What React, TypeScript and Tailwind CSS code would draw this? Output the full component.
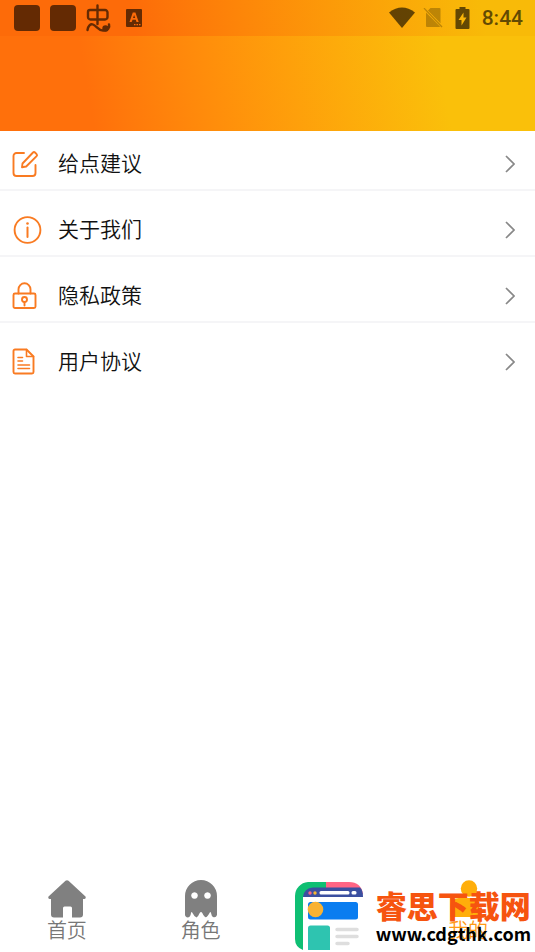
import type { ReactNode } from "react";

type MenuItem = { label: string; icon: ReactNode };

const strokeProps = {
  fill: "none",
  stroke: "currentColor",
  strokeWidth: 1.9,
  strokeLinecap: "round" as const,
  strokeLinejoin: "round" as const,
};

const EditIcon = () => (
  <svg width="28" height="28" viewBox="0 0 28 28" {...strokeProps}>
    <path d="M12 3H4.500a3 3 0 0 0-3 3V23a3 3 0 0 0 3 3H20.500a3 3 0 0 0 3-3V15" />
    <path d="M10.500 13.500 21 2.500q1-1 2 0l1.600 1.600q1 1 0 2L14.200 16.500 10 17.300z" />
  </svg>
);

const InfoIcon = () => (
  <svg width="30" height="28" viewBox="0 0 30 28" {...strokeProps}>
    <circle cx="15.500" cy="14" r="12.900" />
    <path d="M15.500 11.500V21" strokeWidth="2" />
    <circle cx="15.500" cy="7.500" r="1.300" fill="currentColor" stroke="none" />
  </svg>
);

const LockIcon = () => (
  <svg width="28" height="28" viewBox="0 0 28 28" {...strokeProps}>
    <rect x="1.500" y="11.500" width="22" height="14.500" rx="1.500" />
    <path d="M6.500 11.500V7.300a6 6 0 0 1 12 0V11.500" />
    <circle cx="12.500" cy="17.500" r="2.500" />
    <path d="M12.500 20V23.500" />
  </svg>
);

const DocIcon = () => (
  <svg width="28" height="28" viewBox="0 0 28 28" {...strokeProps}>
    <path d="M14.500 1.500H3A1.500 1.500 0 0 0 1.500 3V24a1.500 1.500 0 0 0 1.500 1.500H20a1.500 1.500 0 0 0 1.500-1.500V8.500z" />
    <path d="M14.500 1.500V8.500H21.500M6 9.500H10.500M6 13H10.500M6 17H17.500M6 20.500H17.500" strokeWidth="1.600" />
  </svg>
);

const MENU: MenuItem[] = [
  { label: "给点建议", icon: <EditIcon /> },
  { label: "关于我们", icon: <InfoIcon /> },
  { label: "隐私政策", icon: <LockIcon /> },
  { label: "用户协议", icon: <DocIcon /> },
];

function StatusBar() {
  return (
    <div className="flex h-9 items-center justify-between bg-linear-80 from-[#fd6b09] from-25% to-[#f8ba08] to-90% pr-3 pl-3.5">
      <div className="flex items-center gap-2.5 text-black opacity-60">
        <span className="size-[26px] rounded-sm bg-current" />
        <span className="size-[26px] rounded-sm bg-current" />
        <svg width="26" height="28" viewBox="0 0 26 28" fill="none" stroke="currentColor" strokeWidth="2.400" strokeLinecap="round" strokeLinejoin="round">
          <path d="M11.500 1.500V20M4 6H19a2.500 2.500 0 0 1 2.500 2.500V13a2.500 2.500 0 0 1-2.500 2.500H4.500A2.500 2.500 0 0 1 2 13V8a2 2 0 0 1 2-2z" />
          <path d="M1.500 26C2 22 4.500 19.500 7 20.500C11 22 12 26.500 17 26.500C22 26.500 24 23.500 23 20.500" />
          <circle cx="19.500" cy="24.500" r="2" fill="currentColor" />
        </svg>
        <svg className="ml-1" width="18" height="20" viewBox="0 0 18 20">
          <path fill="currentColor" fillRule="evenodd" d="M1 1H15a1 1 0 0 1 1 1V18a1 1 0 0 1-1 1H1a1 1 0 0 1-1-1V2a1 1 0 0 1 1-1zM6.800 4.500 3.500 14H5.700L6.500 11.700H9.800L10.500 14H12.700L9.400 4.500zM8.100 7 9.200 10H7zM8 16V17.200H9.500V16zM10.500 16V17.200H12V16zM13 16V17.200H14.500V16z" />
        </svg>
      </div>
      <div className="flex items-center text-black opacity-60">
        <svg width="26" height="22" viewBox="0 0 26 22" fill="currentColor">
          <path d="M0 5.500Q13-4.500 26 5.500L13 21z" />
        </svg>
        <svg className="ml-2" width="20" height="20" viewBox="0 0 20 20" fill="currentColor" opacity="0.4">
          <path d="M7.500 0H16.500a1 1 0 0 1 1 1V15.200L5 2.500zM3 4.500 17 18.500Q16.500 19 16 19H4a1 1 0 0 1-1-1z" />
          <path d="M.5.500 1.500-.2 19.500 18.500 18.500 19.500z" />
        </svg>
        <svg className="ml-3" width="15" height="22" viewBox="0 0 15 22" fill="currentColor">
          <path fillRule="evenodd" d="M4.500 0H10.500V2H13.500a1 1 0 0 1 1 1V21a1 1 0 0 1-1 1H1.500a1 1 0 0 1-1-1V3a1 1 0 0 1 1-1H4.500zM8.500 5.500 3.500 13H6.500V18.500L11.500 10.500H8.500z" />
        </svg>
        <span className="ml-3 font-[Roboto,sans-serif] text-[21px] leading-6 font-medium">8:44</span>
      </div>
    </div>
  );
}

function SiteMark() {
  return (
    <div className="pointer-events-none absolute right-1 bottom-0 flex items-center gap-3">
      <svg width="70" height="70" viewBox="0 0 70 70">
        <path fill="#fff" d="M14 0H56a14 14 0 0 1 14 14V70H0V14A14 14 0 0 1 14 0z" />
        <path fill="#0fbf73" d="M14 0H32V15H9V68Q1 65 1 57V14A14 14 0 0 1 14 0z" />
        <path fill="#ff6584" d="M32 0H55Q67 0 69 12H32z" />
        <path fill="#3b4fa0" d="M19 5.500H66Q69 8 69 15H9Q10 6 19 5.500z" />
        <circle cx="16" cy="11" r="1.700" fill="#ff6584" />
        <circle cx="21" cy="11" r="1.700" fill="#f7b731" />
        <rect x="25.500" y="9" width="30" height="3.500" rx="1.500" fill="#fff" />
        <rect x="57.500" y="9" width="5" height="3.500" rx="1.500" fill="#fff" />
        <rect x="14" y="20" width="50" height="17.500" rx="2.500" fill="#0a7df0" />
        <circle cx="21.500" cy="27.500" r="7.800" fill="#f9b233" />
        <path fill="#2ec4b0" d="M16.500 43.500H33.500a2.500 2.500 0 0 1 2.500 2.500V68H14V46a2.500 2.500 0 0 1 2.500-2.500z" />
        <path stroke="#dedede" strokeWidth="3.500" strokeLinecap="round" d="M43 47.500H63M43 54.500H63M43 61.500H54" />
      </svg>
      <div className="font-['Noto_Sans_CJK_SC',sans-serif]">
        <p className="text-[31px] leading-8 font-black text-[#f6540f]">睿思下载网</p>
        <p className="text-lg leading-6 font-bold text-black">www.cdgthk.com</p>
      </div>
    </div>
  );
}

export default function App() {
  return (
    <div className="relative flex min-h-screen flex-col bg-white font-['Noto_Sans_CJK_SC',sans-serif]">
      <header className="h-[131px] bg-linear-80 from-[#ff700b] from-17% to-[#fac00a] to-81%">
        <StatusBar />
      </header>

      {/* Menu */}
      <main className="flex-1">
        <ul>
          {MENU.map((item) => (
            <li key={item.label} className="border-b-2 border-[#f5f5f7] first:-mt-1.5 last:border-0">
              <button className="flex h-16 w-full items-center pt-3.5 pr-5 pl-3 font-[350] text-[#111]">
                <span className="w-7 text-[#f97b22]">{item.icon}</span>
                <span className="ml-[18px] pb-1 text-[21px] leading-7">{item.label}</span>
                <svg className="ml-auto" width="10" height="18" viewBox="0 0 10 18" fill="none" stroke="#888" strokeWidth="1.700">
                  <path d="M1 1 9 9 1 17" />
                </svg>
              </button>
            </li>
          ))}
        </ul>
      </main>

      {/* Tab bar */}
      <nav className="grid grid-cols-4 pb-2.5 text-xl leading-6 font-[350] text-[#777]">
        <button className="flex flex-col items-center">
          <svg width="38" height="38" viewBox="0 0 38 38" fill="#808080">
            <path d="M17.500.8q1.500-1.200 3 0L37.500 16.500q.8 2-1 2.500H35V34.500a3 3 0 0 1-3 3H24V28a1.500 1.500 0 0 0-1.500-1.500H16.500A1.500 1.500 0 0 0 15 28V37.500H6a3 3 0 0 1-3-3V19H1.500q-1.800-.5-1-2.500z" />
          </svg>
          首页
        </button>
        <button className="flex flex-col items-center">
          <svg width="32" height="38" viewBox="0 0 32 38" fill="#808080">
            <path fillRule="evenodd" d="M16 0A16 16 0 0 1 32 16V35Q31 38 28 37Q26.500 36 26 33Q25.500 31 24.500 33Q22 38 20 37Q18 35 17.300 33Q16 31 14.700 33Q13 37 11.500 37.500Q9.500 37 7.500 33Q6.500 31 6 33Q5.500 37 3 37.500Q0 37 0 34.500V16A16 16 0 0 1 16 0zM9.500 12.200a3.300 3.300 0 1 0 .01 0zM22.500 12.200a3.300 3.300 0 1 0 .01 0z" />
          </svg>
          角色
        </button>
        <button className="col-start-4 flex flex-col items-center text-[#ff9a14]">
          <svg width="38" height="38" viewBox="0 0 38 38" fill="#ffae0a">
            <circle cx="20" cy="8.500" r="8.200" />
            <path d="M10 18H26Q30 18 30 22V37H1V26Q2 18 10 18z" />
          </svg>
          我的
        </button>
      </nav>

      <SiteMark />
    </div>
  );
}
